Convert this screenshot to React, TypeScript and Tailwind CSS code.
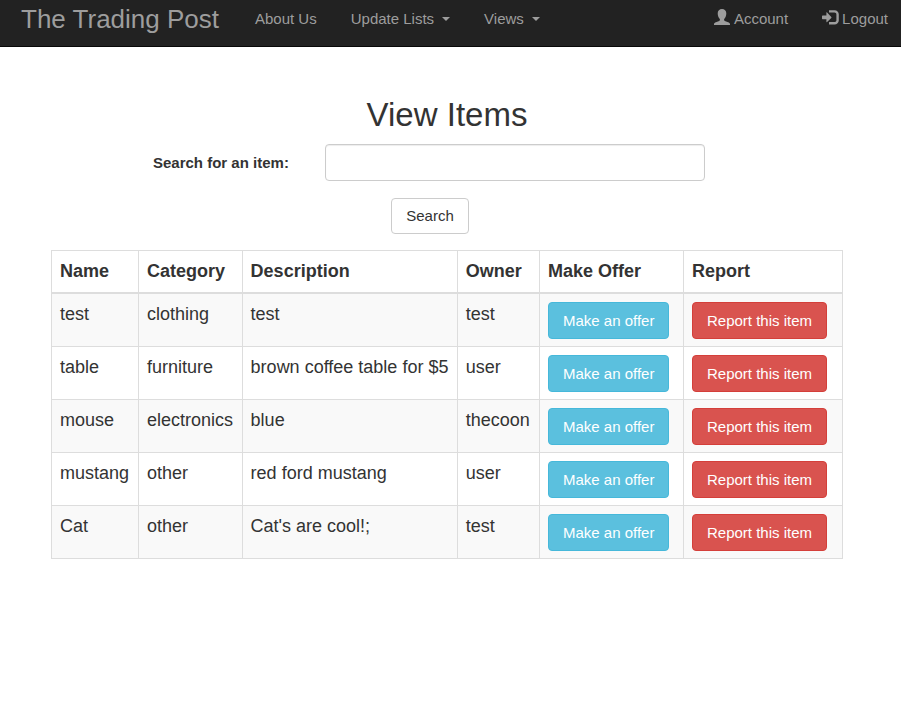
import React from "react";

type Item = { name: string; category: string; description: string; owner: string };

const items: Item[] = [
  { name: "test", category: "clothing", description: "test", owner: "test" },
  { name: "table", category: "furniture", description: "brown coffee table for $5", owner: "user" },
  { name: "mouse", category: "electronics", description: "blue", owner: "thecoon" },
  { name: "mustang", category: "other", description: "red ford mustang", owner: "user" },
  { name: "Cat", category: "other", description: "Cat's are cool!;", owner: "test" },
];

const columns = [
  { title: "Name", width: "w-[11%]" },
  { title: "Category", width: "w-[13.1%]" },
  { title: "Description", width: "w-[27.2%]" },
  { title: "Owner", width: "w-[10.4%]" },
  { title: "Make Offer", width: "w-[18.2%]" },
  { title: "Report", width: "w-[20.1%]" },
];

function Caret() {
  return (
    <svg className="ml-2 h-1 w-2" viewBox="0 0 8 4" fill="currentColor" aria-hidden="true">
      <path d="M0 0h8L4 4z" />
    </svg>
  );
}

function UserIcon() {
  return (
    <svg className="mr-1 mb-1 h-4 w-4" viewBox="0 0 16 16" fill="currentColor" aria-hidden="true">
      <path d="M8 0C5.500 0 3.700 1.700 3.700 4.200c0 2.300.8 4.500 1.900 5.600.3.300.4.800.3 1.200-.1.400-.3.700-.7.900L1.200 13.400C.4 13.800 0 14.300 0 15.100V16h16v-.9c0-.8-.4-1.300-1.200-1.700l-4-1.500c-.4-.2-.6-.5-.7-.9-.1-.4 0-.9.3-1.200 1.100-1.100 1.900-3.300 1.900-5.600C12.300 1.700 10.500 0 8 0z" />
    </svg>
  );
}

function LoginIcon() {
  return (
    <svg className="mr-[3px] mb-1 h-4 w-[17px]" viewBox="0 0 17 16" fill="currentColor" aria-hidden="true">
      <path d="M4.400 3.800c0-.5.400-.6.700-.3L9.300 8c.3.300.3.600 0 .9L5.100 13c-.3.300-.7.200-.7-.3V10.200H.6c-.3 0-.6-.2-.6-.6V7.200c0-.4.300-.6.600-.6h3.800z" />
      <path d="M7 1.200h5.600c2.300 0 4.200 1.700 4.200 4v6.200c0 2.300-1.900 4-4.200 4H7v-2.400h5.400c1.200 0 2-.7 2-1.800V5.400c0-1.100-.8-1.800-2-1.800H7z" />
    </svg>
  );
}

function Navbar() {
  return (
    <nav className="flex h-[47px] items-start justify-between border-b border-[#080808] bg-[#222] pr-[13px] pl-[21px] text-[15px] leading-[38px] text-[#9d9d9d]">
      <div className="flex">
        <a href="#" className="mr-9 text-[26px]">The Trading Post</a>
        <ul className="flex gap-[34px]">
          <li><a href="#">About Us</a></li>
          <li><a href="#" className="flex items-center">Update Lists<Caret /></a></li>
          <li><a href="#" className="flex items-center">Views<Caret /></a></li>
        </ul>
      </div>
      <ul className="flex gap-[34px]">
        <li><a href="#" className="flex items-center"><UserIcon />Account</a></li>
        <li><a href="#" className="flex items-center"><LoginIcon />Logout</a></li>
      </ul>
    </nav>
  );
}

const button = "rounded border px-[14px] text-[15px] whitespace-nowrap";
const cell = "border border-[#ddd] px-2 pt-2 pb-[7px]";

export default function App() {
  return (
    <div className="min-h-screen bg-white font-['Liberation_Sans',Arial,sans-serif] text-[#333]">
      <Navbar />
      <main className="pt-[49px] pr-[58px] pl-[51px]">
        <h1 className="text-center text-[33px] leading-[38px]">View Items</h1>
        <form className="mt-[10px]" onSubmit={(e) => e.preventDefault()}>
          <div className="flex items-center justify-center gap-8 pr-9">
            <label htmlFor="search" className="w-[140px] text-[15px] leading-[25px] font-bold whitespace-nowrap">Search for an item:</label>
            <input
              id="search"
              type="text"
              className="h-[37px] w-[380px] rounded border border-[#ccc] px-3 text-[15px] shadow-[inset_0_1px_1px_rgba(0,0,0,0.075)]"
            />
          </div>
          <div className="mt-[17px] flex justify-center pr-[34px]">
            <button type="submit" className={`${button} h-9 border-[#ccc] bg-white`}>Search</button>
          </div>
        </form>
        <table className="mt-4 w-full table-fixed border-collapse border border-[#ddd] text-[18px] leading-[24px]">
          <thead>
            <tr>
              {columns.map((c) => (
                <th key={c.title} scope="col" className={`${c.width} border border-b-2 border-[#ddd] px-2 pt-2 pb-[9px] text-left font-bold whitespace-nowrap`}>
                  {c.title}
                </th>
              ))}
            </tr>
          </thead>
          <tbody>
            {items.map((item) => (
              <tr key={item.name} className="align-top odd:bg-[#f9f9f9]">
                {[item.name, item.category, item.description, item.owner].map((text, i) => (
                  <td key={i} className={cell}>{text}</td>
                ))}
                <td className={cell}>
                  <button type="button" className={`${button} block h-[37px] border-[#46b8da] bg-[#5bc0de] text-white`}>Make an offer</button>
                </td>
                <td className={cell}>
                  <button type="button" className={`${button} block h-[37px] border-[#d43f3a] bg-[#d9534f] text-white`}>Report this item</button>
                </td>
              </tr>
            ))}
          </tbody>
        </table>
      </main>
    </div>
  );
}
